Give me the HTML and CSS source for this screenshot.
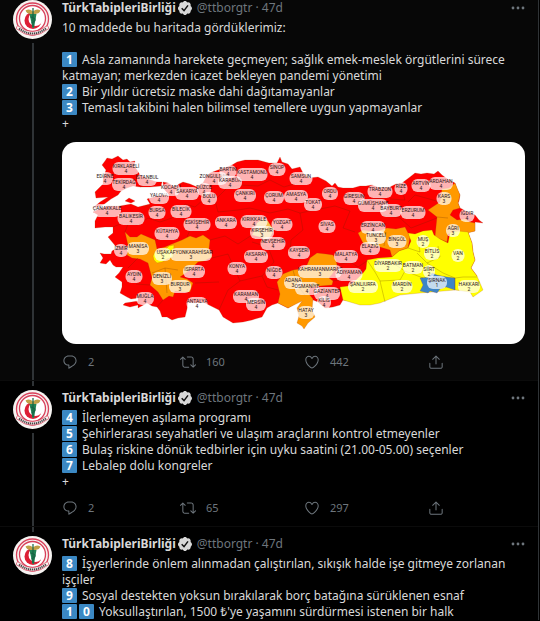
FILE: index.html
```html
<!DOCTYPE html>
<html lang="tr">
<head>
<meta charset="utf-8">
<meta name="viewport" content="width=device-width, initial-scale=1">
<title>TürkTabipleriBirliği</title>
<link rel="stylesheet" href="styles.css">
</head>
<body>
<svg class="defs" aria-hidden="true">
  <symbol id="logo" viewBox="0 0 39 39">
    <circle cx="19.500" cy="19.500" r="19.500" fill="#f6f3f1"/>
    <circle cx="19.500" cy="19" r="16" fill="none" stroke="#d8405a" stroke-width="1.300"/>
    <circle cx="19.500" cy="18.500" r="13" fill="#fff" stroke="#d8405a" stroke-width="1.300"/>
    <circle cx="20" cy="20.500" r="8.500" fill="#dc1f35"/>
    <circle cx="22.500" cy="19" r="7" fill="#fff"/>
    <path d="M12.500 10.500q4-2.500 7.500 1q3.500-3.500 7.500-1q-1 3-5 3.500h-5q-4-.5-5-3.500Z" fill="#c0a048"/>
    <path d="M16.500 14h7l-2.500 14h-1.500Z" fill="#218455"/>
    <path d="M20 8v19M17.500 17q5 1 4.500 3t-3.500 3" fill="none" stroke="#176344" stroke-width="1.200"/>
    <path d="M4.500 25.500Q19.500 37.500 34.500 25.500L36 28.500Q19.500 42 3 28.500Z" fill="#f6f3f1" stroke="#d8405a" stroke-width=".7"/>
    <path d="M6 28.500Q19.500 38.500 33 28.500" fill="none" stroke="#4a4547" stroke-width="2" stroke-dasharray="1.300 .7"/>
  </symbol>
  <symbol id="verified" viewBox="1.500 1.500 21 21">
    <path fill="#d9d9d9" d="M22.500 12.500c0-1.580-.875-2.950-2.148-3.600.154-.435.238-.905.238-1.400 0-2.210-1.710-3.998-3.818-3.998-.47 0-.92.084-1.336.25C14.818 2.415 13.510 1.500 12 1.500s-2.816.917-3.437 2.250c-.415-.165-.866-.25-1.336-.25-2.110 0-3.818 1.790-3.818 4 0 .494.083.964.237 1.400-1.272.65-2.147 2.018-2.147 3.600 0 1.495.782 2.798 1.942 3.486-.02.17-.032.340-.032.514 0 2.210 1.708 4 3.818 4 .47 0 .92-.086 1.335-.25.620 1.334 1.926 2.250 3.437 2.250 1.512 0 2.818-.916 3.437-2.250.415.163.865.248 1.336.248 2.110 0 3.818-1.790 3.818-4 0-.174-.012-.344-.033-.513 1.158-.687 1.943-1.990 1.943-3.484z"/>
    <path d="M7 12.500l3.500 3.400L16.500 8" fill="none" stroke="#111" stroke-width="2.200"/>
  </symbol>
  <symbol id="reply" viewBox="0 0 24 24"><path d="M14.046 2.242l-4.148-.01h-.002c-4.374 0-7.800 3.427-7.800 7.802 0 4.098 3.186 7.206 7.465 7.370v3.828c0 .108.044.286.120.403.142.225.384.347.632.347.138 0 .277-.038.402-.118.264-.168 6.473-4.140 8.088-5.506 1.902-1.610 3.040-3.970 3.043-6.312v-.017c-.006-4.367-3.430-7.787-7.800-7.788zm3.787 12.972c-1.134.960-4.862 3.405-6.772 4.643V16.670c0-.414-.335-.75-.75-.75h-.396c-3.660 0-6.318-2.476-6.318-5.886 0-3.534 2.768-6.302 6.300-6.302l4.147.010h.002c3.532 0 6.300 2.766 6.302 6.296-.003 1.910-.942 3.844-2.514 5.176z"/></symbol>
  <symbol id="retweet" viewBox="0 0 24 24"><path d="M23.770 15.670c-.292-.293-.767-.293-1.060 0l-2.220 2.220V7.650c0-2.068-1.683-3.750-3.750-3.750h-5.850c-.414 0-.75.336-.75.750s.336.750.750.750h5.850c1.240 0 2.250 1.010 2.250 2.250v10.240l-2.220-2.220c-.293-.293-.768-.293-1.060 0s-.294.768 0 1.060l3.500 3.500c.145.147.337.220.530.220s.383-.072.530-.220l3.500-3.500c.294-.292.294-.767 0-1.060zm-10.660 3.280H7.260c-1.240 0-2.250-1.010-2.250-2.250V6.460l2.220 2.220c.148.147.340.220.532.220s.384-.073.530-.220c.293-.293.293-.768 0-1.060l-3.500-3.500c-.293-.294-.768-.294-1.060 0l-3.500 3.500c-.294.292-.294.767 0 1.060s.767.293 1.060 0l2.220-2.220V16.700c0 2.068 1.683 3.750 3.750 3.750h5.850c.414 0 .750-.336.750-.750s-.337-.750-.750-.750z"/></symbol>
  <symbol id="like" viewBox="0 0 24 24"><path d="M12 21.638h-.014C9.403 21.590 1.950 14.856 1.950 8.478c0-3.064 2.525-5.754 5.403-5.754 2.290 0 3.830 1.580 4.646 2.730.814-1.148 2.354-2.730 4.645-2.730 2.880 0 5.404 2.690 5.404 5.755 0 6.376-7.454 13.110-10.037 13.157H12zM7.354 4.225c-2.080 0-3.903 1.988-3.903 4.255 0 5.740 7.034 11.596 8.550 11.658 1.518-.062 8.550-5.917 8.550-11.658 0-2.267-1.823-4.255-3.903-4.255-2.528 0-3.940 2.936-3.952 2.965-.230.562-1.156.562-1.387 0-.014-.030-1.425-2.965-3.954-2.965z"/></symbol>
  <symbol id="share" viewBox="0 0 24 24"><path d="M17.530 7.470l-5-5c-.293-.293-.768-.293-1.060 0l-5 5c-.294.293-.294.768 0 1.060s.767.294 1.060 0l3.720-3.720V15c0 .414.336.750.750.750s.750-.336.750-.750V4.810l3.720 3.720c.146.147.338.220.530.220s.384-.072.530-.220c.293-.293.293-.767 0-1.060z"/><path d="M19.708 21.944H4.292C3.028 21.944 2 20.916 2 19.652V14c0-.414.336-.750.750-.750s.750.336.750.750v5.652c0 .437.355.792.792.792h15.416c.437 0 .792-.355.792-.792V14c0-.414.336-.750.750-.750s.750.336.750.750v5.652c0 1.264-1.028 2.292-2.292 2.292z"/></symbol>
  <symbol id="more" viewBox="0 0 14 14"><circle cx="2" cy="7" r="1.400"/><circle cx="7" cy="7" r="1.400"/><circle cx="12" cy="7" r="1.400"/></symbol>
</svg>

<main class="thread">
  <article class="tweet tweet-first">
    <div class="rail">
      <svg class="avatar"><use href="#logo"/></svg>
      <span class="line"></span>
    </div>
    <div class="content">
      <header class="head">
        <a class="name" href="#">TürkTabipleriBirliği</a>
        <svg class="badge"><use href="#verified"/></svg>
        <span class="meta">@ttborgtr · 47d</span>
        <button class="more" aria-label="Diğer"><svg><use href="#more"/></svg></button>
      </header>
      <p class="text">10 maddede bu haritada gördüklerimiz:<br><br><span class="key">1</span>Asla zamanında harekete geçmeyen; sağlık emek-meslek örgütlerini sürece katmayan; merkezden icazet bekleyen pandemi yönetimi<br><span class="key">2</span>Bir yıldır ücretsiz maske dahi dağıtamayanlar<br><span class="key">3</span>Temaslı takibini halen bilimsel temellere uygun yapmayanlar<br>+</p>
      <svg class="map" viewBox="62 142 463 202" role="img" aria-label="Türkiye risk haritası">
        <g class="land">
          <path class="red" d="M102 165L105 161 107 158 112 159 118 156 123 160 127 159 130 162 135 161 134 166 137 170 140 175 148 179 157 182 162 182 161 186 150 187 140 187 133 186 127 188 121 191 118 195 111 199 103 205 93 208 100 202 108 197 96 198 95 192 99 188 103 184 103 178 106 170Z"/>
          <path class="red" d="M163 182L168 183 175 187 179 184 183 182 190 184 197 187 203 183 206 177 210 173 218 170 227 167 232 165 237 162 245 160 258 160 269 163 277 163 280 157 282 162 288 164 292 169 300 167 303 173 309 178 318 177 326 181 332 186 335 183 338 187 343 188 353 188 360 186 366 186 372 185 380 188 390 187 396 184 402 183 410 177 415 173 421 174 427 173 434 174 438 171 442 175 446 178 455 183 457 189 460 195 459 201 458 203 460 208 468 212 475 215 479 220 483 223 475 222 475 231 468 232 472 243 473 252 475 260 471 268 477 276 473 285 420 290 370 300 360 303 352 301 343 300 340 305 333 307 325 308 318 302 313 300 302 299 298 302 288 308 278 303 272 305 267 308 262 317 255 319 252 320 243 322 233 323 228 320 223 317 219 310 211 306 203 302 196 303 188 302 187 309 185 317 178 318 172 320 167 317 162 317 160 311 157 307 152 306 147 303 138 308 138 305 130 307 123 305 125 303 138 301 138 298 131 299 127 297 120 293 122 287 122 282 115 277 119 273 123 267 116 267 113 265 110 260 106 264 100 263 103 258 100 253 104 254 111 254 112 251 117 248 113 243 108 237 113 233 113 227 105 227 95 228 95 221 98 215 93 212 97 210 107 206 120 206 131 204 138 207 150 204 147 199 157 196 169 195 164 189Z"/>
          <path class="red" d="M125 201l4-3 6 3-4 2zM144 207l4-2 3 2z"/>
          <path class="orange" d="M125 232L130 237 137 237 141 234 148 237 155 240 157 249 165 247 172 244 182 240 190 236 196 238 203 235 210 240 209 249 212 257 204 261 198 262 190 270 180 277 187 279 193 283 190 292 182 292 175 291 173 297 169 296 163 300 158 292 150 285 152 278 148 263 140 259 132 258 127 255 128 245Z"/>
          <path class="yellow" d="M153 256L155 252 164 251 169 246 174 245 173 257 167 259 162 262 157 263 154 260Z"/>
          <path class="tan" d="M257 223L262 219 268 221 271 226 274 229 271 236 266 240 260 237 252 235 255 229Z"/>
          <path class="orange" d="M277 282L283 274 293 270 300 269 307 265 310 258 317 253 326 254 333 255 336 260 337 265 333 273 329 278 333 281 332 285 320 286 310 287 309 294 313 299 312 310 315 317 308 323 304 329 302 326 297 323 299 316 297 308 302 301 288 308 278 303 280 294Z"/>
          <path class="orange" d="M442 189L449 188 455 183 460 195 458 203 460 208 453 210 450 215 457 220 465 219 470 222 475 223 475 231 468 233 448 234 447 242 435 237 437 217 428 210 440 202Z"/>
          <path class="orange" d="M358 233L363 230 375 232 387 228 396 229 405 227 410 237 408 248 399 251 392 257 390 250 380 247 363 243Z"/>
          <path class="yellow" d="M408 233L415 234 423 231 432 230 434 235 440 239 448 243 450 233 458 231 468 232 472 243 473 252 475 260 471 268 477 276 483 290 473 297 470 292 455 290 420 293 400 295 390 299 380 303 370 305 360 305 343 300 340 287 348 286 353 283 358 278 363 273 366 269 367 260 378 258 392 257 399 251 408 248 411 241Z"/>
          <path class="blue" d="M420 278L429 277 432 273 437 275 447 277 455 278 455 290 446 287 440 289 437 293 430 291 428 293 420 291 423 285Z"/>
        </g>
        <path class="borders" d="M140 187L146 184M113 227L125 222 137 225 148 218 160 222 172 218 185 204 195 207 203 200 215 200 227 188 240 185 258 186 270 180 284 187 297 183M125 232L128 224M155 240L165 238 180 239M183 218L190 230 187 237M210 240L225 236 238 244 252 235M212 258L228 254 240 281 228 290 219 310M215 200L218 212 238 210 250 208 270 213 288 209 300 213 303 230 291 240 290 254M300 213L315 210 335 206 350 211 343 228 355 232M325 186L330 198M350 190L365 200 383 198 388 190M390 199L405 200 402 190M408 202L415 195 440 202M383 215L400 218 411 228 437 218M252 242L268 247 274 262 262 276 267 287 278 290M240 281L262 276M303 255L292 246M337 265L350 262 358 267 367 261M333 281L345 279 353 283M138 258L128 268M152 273L165 268 178 270M165 268L167 293M150 285L136 284M163 300L157 307M195 283L219 282M293 270L297 285 305 295M408 248L420 252 418 240M367 260L375 272 380 281 400 280 405 271 391 262M380 281L385 302M405 271L423 278M417 253L427 263 440 257 438 246M427 263L443 273 455 278 463 277 477 277M455 290L455 278M386 232L384 246M437 217L448 218"/>
        <g id="provinces"></g>
      </svg>
      <footer class="actions">
        <button class="action" aria-label="Yanıtla"><svg><use href="#reply"/></svg>2</button>
        <button class="action" aria-label="Retweetle"><svg><use href="#retweet"/></svg>160</button>
        <button class="action" aria-label="Beğen"><svg><use href="#like"/></svg>442</button>
        <button class="action" aria-label="Paylaş"><svg><use href="#share"/></svg></button>
      </footer>
    </div>
  </article>

  <article class="tweet">
    <div class="rail">
      <span class="line line-top"></span>
      <svg class="avatar"><use href="#logo"/></svg>
      <span class="line"></span>
    </div>
    <div class="content">
      <header class="head">
        <a class="name" href="#">TürkTabipleriBirliği</a>
        <svg class="badge"><use href="#verified"/></svg>
        <span class="meta">@ttborgtr · 47d</span>
        <button class="more" aria-label="Diğer"><svg><use href="#more"/></svg></button>
      </header>
      <p class="text"><span class="key">4</span>İlerlemeyen aşılama programı<br><span class="key">5</span>Şehirlerarası seyahatleri ve ulaşım araçlarını kontrol etmeyenler<br><span class="key">6</span>Bulaş riskine dönük tedbirler için uyku saatini (21.00-05.00) seçenler<br><span class="key">7</span>Lebalep dolu kongreler<br>+</p>
      <footer class="actions">
        <button class="action" aria-label="Yanıtla"><svg><use href="#reply"/></svg>2</button>
        <button class="action" aria-label="Retweetle"><svg><use href="#retweet"/></svg>65</button>
        <button class="action" aria-label="Beğen"><svg><use href="#like"/></svg>297</button>
        <button class="action" aria-label="Paylaş"><svg><use href="#share"/></svg></button>
      </footer>
    </div>
  </article>

  <article class="tweet">
    <div class="rail">
      <span class="line line-top"></span>
      <svg class="avatar"><use href="#logo"/></svg>
    </div>
    <div class="content">
      <header class="head">
        <a class="name" href="#">TürkTabipleriBirliği</a>
        <svg class="badge"><use href="#verified"/></svg>
        <span class="meta">@ttborgtr · 47d</span>
        <button class="more" aria-label="Diğer"><svg><use href="#more"/></svg></button>
      </header>
      <p class="text"><span class="key">8</span>İşyerlerinde önlem alınmadan çalıştırılan, sıkışık halde işe gitmeye zorlanan işçiler<br><span class="key">9</span>Sosyal destekten yoksun bırakılarak borç batağına sürüklenen esnaf<br><span class="key key-joined">1</span><span class="key">0</span>Yoksullaştırılan, 1500 ₺'ye yaşamını sürdürmesi istenen bir halk</p>
    </div>
  </article>
</main>
<script src="map.js"></script>
</body>
</html>
```
FILE: styles.css
```css
* {
  box-sizing: border-box;
}

body {
  margin: 0;
  background: #000;
  color: #d9d9d9;
  font-family: "Noto Sans", "Open Sans", sans-serif;
  font-size: 12px;
  line-height: 16px;
}

button {
  padding: 0;
  border: 0;
  background: none;
  color: inherit;
  font: inherit;
}

.defs {
  display: none;
}

.thread {
  margin-right: 1px;
  border-right: 1px solid #2f3336;
}

.tweet {
  display: flex;
  gap: 10px;
  padding: 0 13px;
}

.tweet + .tweet {
  border-top: 1px solid #0b0b0b;
}

.tweet-first {
  background: #070707;
}

.rail {
  display: flex;
  flex: none;
  flex-direction: column;
  align-items: center;
  gap: 4px;
  width: 39px;
}

.avatar {
  flex: none;
  width: 39px;
  height: 39px;
}

.line {
  flex: 1;
  width: 2px;
  background: #2f3336;
}

.line-top {
  flex: none;
  height: 5px;
}

.content {
  flex: 1;
  min-width: 0;
}

.tweet + .tweet .content {
  padding-top: 9px;
}

.head {
  display: flex;
  align-items: center;
}

.name {
  color: #d9d9d9;
  font-weight: 700;
  text-decoration: none;
}

.badge {
  width: 14px;
  height: 14px;
  margin: 0 5px 0 2px;
}

.meta {
  color: #6e767d;
}

.more {
  width: 14px;
  height: 14px;
  margin-left: auto;
}

.more svg {
  display: block;
  width: 14px;
  height: 14px;
  fill: #6e767d;
}

.text {
  margin: 4px 0 0;
}

.key {
  display: inline-block;
  width: 15px;
  height: 15px;
  margin-right: 5px;
  border-radius: 1px;
  background: #3b88c3;
  color: #fff;
  font-weight: 700;
  line-height: 15px;
  text-align: center;
  vertical-align: top;
}

.key-joined {
  margin-right: 2px;
}

.map {
  display: block;
  width: 100%;
  margin-top: 10px;
  border-radius: 14px;
  background: #fff;
}

.land path {
  stroke: #a33c10;
  stroke-opacity: 0.4;
  stroke-width: 0.5;
  stroke-linejoin: round;
}

.red {
  fill: #fe0000;
}

.orange {
  fill: #ff9900;
}

.yellow {
  fill: #ffff00;
}

.tan {
  fill: #f5bd4c;
}

.blue {
  fill: #3d85c6;
}

.borders {
  fill: none;
  stroke: #5d2500;
  stroke-opacity: 0.4;
  stroke-width: 0.6;
}

.pill {
  fill: #fff;
  fill-opacity: 0.7;
}

.label {
  fill: #2c1515;
  font-family: Roboto, sans-serif;
  font-size: 5px;
  text-anchor: middle;
}

.actions {
  display: grid;
  grid-template-columns: 118px 124px 124px auto;
  padding: 9px 0;
  color: #6e767d;
  font-size: 11px;
}

.action {
  display: flex;
  align-items: center;
  gap: 10px;
  height: 18px;
}

.action svg {
  width: 16px;
  height: 16px;
  fill: #6e767d;
}
```
FILE: map.js
```js
// Each entry: name, centre x, centre y of the name, badge width, risk level.
const provinces = [
  ["KIRKLARELİ", 126, 166, 27, 4], ["EDİRNE", 105, 176, 16, 4], ["TEKİRDAĞ", 124, 182, 24, 4],
  ["İSTANBUL", 147, 177, 20, 4], ["YALOVA", 159, 195, 20, 4], ["KOCAELİ", 171, 187, 18, 4],
  ["SAKARYA", 187, 191, 24, 4], ["DÜZCE", 204, 187, 14, 4], ["BOLU", 209, 196, 16, 4],
  ["ÇANAKKALE", 107, 208, 28, 4], ["BURSA", 157, 210, 17, 4], ["BİLECİK", 181, 209, 21, 4],
  ["BALIKESİR", 131, 216, 27, 4], ["ESKİŞEHİR", 197, 222, 27, 4], ["KÜTAHYA", 167, 231, 25, 4],
  ["MANİSA", 138, 246, 22, 3], ["İZMİR", 121, 248, 14, 4], ["ZONGULDAK", 214, 176, 27, 4],
  ["BARTIN", 228, 169, 17, 4], ["KARABÜK", 230, 180, 24, 4], ["KASTAMONU", 252, 172, 31, 4],
  ["SİNOP", 277, 167, 17, 4], ["SAMSUN", 301, 176, 23, 4], ["ÇANKIRI", 245, 193, 22, 4],
  ["ÇORUM", 274, 195, 20, 4], ["AMASYA", 296, 194, 24, 4], ["TOKAT", 313, 202, 18, 4],
  ["ORDU", 330, 191, 16, 4], ["GİRESUN", 354, 196, 21, 4], ["ANKARA", 226, 220, 22, 4],
  ["KIRIKKALE", 254, 219, 27, 4], ["YOZGAT", 282, 222, 21, 4], ["KIRŞEHİR", 262, 230, 24, 3],
  ["NEVŞEHİR", 273, 241, 25, 4], ["SİVAS", 327, 224, 17, 4], ["KAYSERİ", 299, 250, 22, 4],
  ["TRABZON", 380, 189, 25, 4], ["RİZE", 401, 186, 13, 4], ["ARTVİN", 421, 183, 19, 4],
  ["ARDAHAN", 441, 181, 24, 4], ["KARS", 444, 196, 15, 3], ["GÜMÜŞHANE", 373, 203, 30, 4],
  ["BAYBURT", 391, 208, 22, 4], ["ERZURUM", 413, 210, 25, 4], ["IĞDIR", 467, 213, 15, 4],
  ["AĞRI", 453, 228, 14, 3], ["ERZİNCAN", 373, 225, 25, 4], ["TUNCELİ", 376, 235, 20, 3],
  ["BİNGÖL", 397, 239, 19, 3], ["MUŞ", 423, 239, 13, 2], ["ELAZIĞ", 370, 246, 20, 4],
  ["UŞAK", 163, 252, 17, 2], ["AFYONKARAHİSAR", 191, 252, 42, 3], ["ISPARTA", 194, 269, 22, 4],
  ["AYDIN", 134, 274, 17, 4], ["DENİZLİ", 162, 276, 20, 3], ["BURDUR", 180, 284, 22, 3],
  ["MUĞLA", 145, 296, 18, 4], ["ANTALYA", 197, 301, 21, 4], ["AKSARAY", 256, 254, 24, 4],
  ["KONYA", 237, 266, 19, 4], ["NİĞDE", 274, 270, 17, 4], ["MALATYA", 346, 254, 24, 4],
  ["KAHRAMANMARAŞ", 320, 269, 44, 3], ["ADIYAMAN", 349, 272, 27, 4], ["ADANA", 293, 280, 18, 3],
  ["OSMANİYE", 307, 286, 24, 4], ["GAZİANTEP", 327, 291, 26, 4], ["KİLİS", 324, 300, 14, 4],
  ["KARAMAN", 246, 294, 26, 4], ["MERSİN", 256, 302, 20, 4], ["HATAY", 306, 310, 17, 3],
  ["ŞANLIURFA", 363, 284, 30, 2], ["DİYARBAKIR", 388, 263, 28, 2], ["BATMAN", 413, 265, 20, 2],
  ["BİTLİS", 432, 251, 16, 2], ["SİİRT", 429, 269, 12, 2], ["VAN", 458, 253, 13, 2],
  ["MARDİN", 402, 284, 21, 2], ["ŞIRNAK", 437, 280, 20, 1], ["HAKKARİ", 469, 284, 22, 2]
];

const layer = document.getElementById("provinces");

function add(tag, attributes, content) {
  const node = document.createElementNS("http://www.w3.org/2000/svg", tag);
  for (const key in attributes) node.setAttribute(key, attributes[key]);
  if (content !== undefined) node.textContent = content;
  layer.appendChild(node);
}

for (const [name, x, y, width, level] of provinces) {
  add("rect", { class: "pill", x: x - width / 2, y: y - 4, width, height: 13, rx: 6 });
  add("text", { class: "label", x, y: y + 2 }, name);
  add("text", { class: "label", x, y: y + 7 }, level);
}
```
